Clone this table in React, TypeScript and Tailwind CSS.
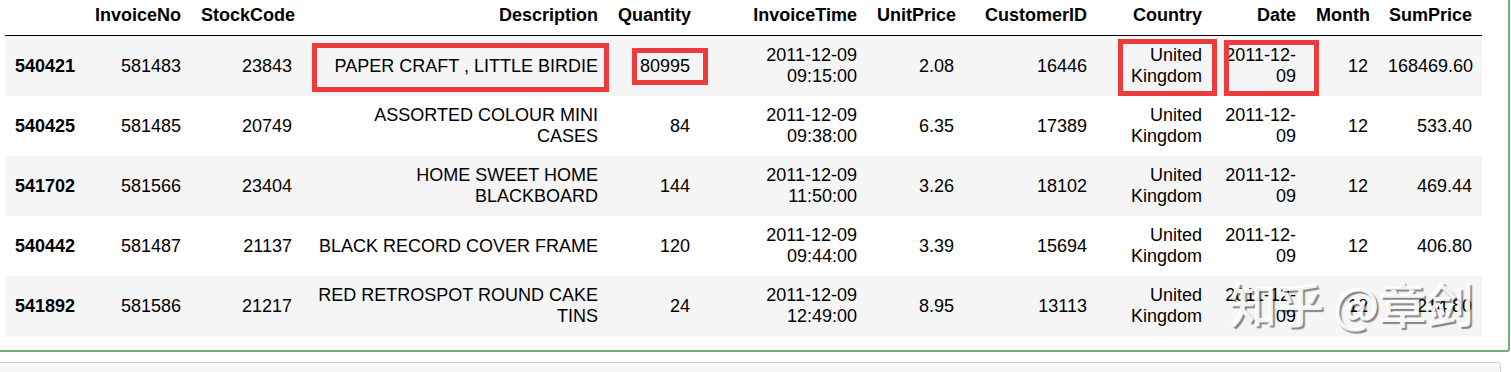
const columns = [
  { key: "idx", label: "", width: 78 },
  { key: "InvoiceNo", label: "InvoiceNo", width: 108 },
  { key: "StockCode", label: "StockCode", width: 111 },
  { key: "Description", label: "Description", width: 306 },
  { key: "Quantity", label: "Quantity", width: 92 },
  { key: "InvoiceTime", label: "InvoiceTime", width: 167 },
  { key: "UnitPrice", label: "UnitPrice", width: 97 },
  { key: "CustomerID", label: "CustomerID", width: 133 },
  { key: "Country", label: "Country", width: 115 },
  { key: "Date", label: "Date", width: 94 },
  { key: "Month", label: "Month", width: 72 },
  { key: "SumPrice", label: "SumPrice", width: 104 },
];

const rows = [
  ["540421", "581483", "23843", "PAPER CRAFT , LITTLE BIRDIE", "80995", "2011-12-09 09:15:00", "2.08", "16446", "United Kingdom", "2011-12-09", "12", "168469.60"],
  ["540425", "581485", "20749", "ASSORTED COLOUR MINI CASES", "84", "2011-12-09 09:38:00", "6.35", "17389", "United Kingdom", "2011-12-09", "12", "533.40"],
  ["541702", "581566", "23404", "HOME SWEET HOME BLACKBOARD", "144", "2011-12-09 11:50:00", "3.26", "18102", "United Kingdom", "2011-12-09", "12", "469.44"],
  ["540442", "581487", "21137", "BLACK RECORD COVER FRAME", "120", "2011-12-09 09:44:00", "3.39", "15694", "United Kingdom", "2011-12-09", "12", "406.80"],
  ["541892", "581586", "21217", "RED RETROSPOT ROUND CAKE TINS", "24", "2011-12-09 12:49:00", "8.95", "13113", "United Kingdom", "2011-12-09", "12", "214.80"],
];

function Cell({ value, col }: { value: string; col: number }) {
  if (col === 9) {
    // dates break after the second hyphen in the notebook
    return (
      <>
        {value.slice(0, 8)}
        <br />
        {value.slice(8)}
      </>
    );
  }
  return <>{value}</>;
}

export default function App() {
  return (
    <div className="relative w-[1511px] h-[372px] overflow-hidden bg-white text-black font-['Liberation_Sans',Arial,sans-serif] text-[18px] leading-[21px]">
      {/* output cell (selected) */}
      <div className="-mt-[12px] -ml-[4px] w-[1514px] border-2 border-[#6fb06f] rounded-[3px] pt-[10px] pb-[14px] pl-[7px]">
        <table className="table-fixed border-collapse w-[1477px]">
          <colgroup>
            {columns.map((c) => (
              <col key={c.key} style={{ width: c.width }} />
            ))}
          </colgroup>
          <thead>
            <tr className="border-b border-black">
              {columns.map((c) => (
                <th key={c.key} className="px-[10px] pt-[5px] pb-[9px] text-right font-bold whitespace-nowrap">
                  {c.label}
                </th>
              ))}
            </tr>
          </thead>
          <tbody>
            {rows.map((r, i) => (
              <tr key={r[0]} className={i % 2 === 0 ? "bg-[#f5f5f5]" : "bg-white"}>
                {r.map((v, j) =>
                  j === 0 ? (
                    <th key={j} className="px-[10px] py-[9px] h-[60px] text-left font-bold align-middle">
                      {v}
                    </th>
                  ) : (
                    <td key={j} className="px-[10px] py-[9px] h-[60px] text-right align-middle">
                      <Cell value={v} col={j} />
                    </td>
                  )
                )}
              </tr>
            ))}
          </tbody>
        </table>
      </div>

      {/* next cell */}
      <div className="mt-[10px] -ml-[4px] w-[1505px] h-[40px] border border-[#cfcfcf] rounded-[3px] bg-[#f7f7f7]" />

      {/* red annotation boxes */}
      <div className="absolute left-[312px] top-[43px] w-[297px] h-[49px] border-[5px] border-[#ec3b3d]" />
      <div className="absolute left-[632px] top-[48px] w-[76px] h-[37px] border-[5px] border-[#ec3b3d]" />
      <div className="absolute left-[1118px] top-[39px] w-[99px] h-[57px] border-[5px] border-[#ec3b3d]" />
      <div className="absolute left-[1224px] top-[40px] w-[95px] h-[56px] border-[5px] border-[#ec3b3d]" />

      {/* watermark */}
      <div className="absolute left-[1229px] top-[278px] text-[48px] leading-none font-medium tracking-[-1px] text-white/90 whitespace-nowrap font-['Noto_Sans_CJK_SC',sans-serif] [text-shadow:2px_2px_1px_rgba(0,0,0,0.45)]">
        知乎 @章剑
      </div>
    </div>
  );
}
